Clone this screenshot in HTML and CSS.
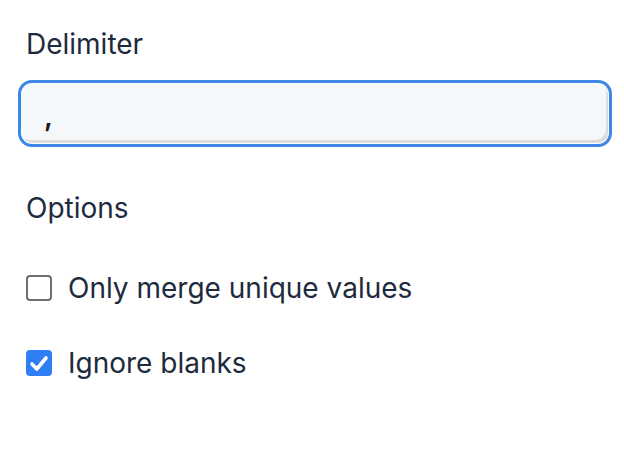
FILE: index.html
```html
<!DOCTYPE html>
<html>
<head>
<meta charset="utf-8">
<link rel="stylesheet" href="styles.css">
</head>
<body>
<div class="form">
  <label class="label" for="delim">Delimiter</label>
  <div class="input">
    <span class="input-value">,</span>
  </div>
  <div class="section-title">Options</div>
  <div class="option">
    <span class="box"></span>
    <span class="option-text">Only merge unique values</span>
  </div>
  <div class="option option-second">
    <span class="box box-checked">
      <svg viewBox="0 0 26 26" width="26" height="26"><path d="M6 14l4.8 5L20 8" fill="none" stroke="#fff" stroke-width="3.6" stroke-linecap="round" stroke-linejoin="round"/></svg>
    </span>
    <span class="option-text">Ignore blanks</span>
  </div>
</div>
</body>
</html>
```

FILE: styles.css
```css
html, body {
  margin: 0;
  padding: 0;
  background: #ffffff;
}
body {
  font-family: Inter, "Noto Sans", sans-serif;
  font-size: 28px;
  line-height: 36px;
  color: #1d2b3d;
}
.form {
  padding: 26px 12px 0 18px;
  display: flex;
  flex-direction: column;
}
.label {
  display: block;
  margin-left: 8px;
}
.input {
  margin-top: 18px;
  height: 67px;
  box-sizing: border-box;
  border: 3px solid #3b86e6;
  border-radius: 14px;
  background: #f5f8fb;
  box-shadow: inset 0 0 0 1px #ffffff, inset -3px -4px 0 #dcdcdc;
  display: flex;
  align-items: center;
  padding: 4px 0 0 23px;
}
.input-value {
  font-weight: 600;
  color: #1a1a1a;
}
.section-title {
  margin-top: 43px;
  margin-left: 8px;
}
.option {
  display: flex;
  align-items: center;
  gap: 16px;
  margin-top: 44px;
  margin-left: 8px;
}
.option-second {
  margin-top: 39px;
}
.box {
  width: 26px;
  height: 26px;
  box-sizing: border-box;
  border: 2px solid #6f6f6f;
  border-radius: 4px;
  background: #fff;
  display: flex;
  align-items: center;
  justify-content: center;
  flex: none;
}
.box-checked {
  border: 0;
  background: #2f7ef4;
}
.box-checked svg {
  display: block;
}
.option-text {
  display: block;
}
```
